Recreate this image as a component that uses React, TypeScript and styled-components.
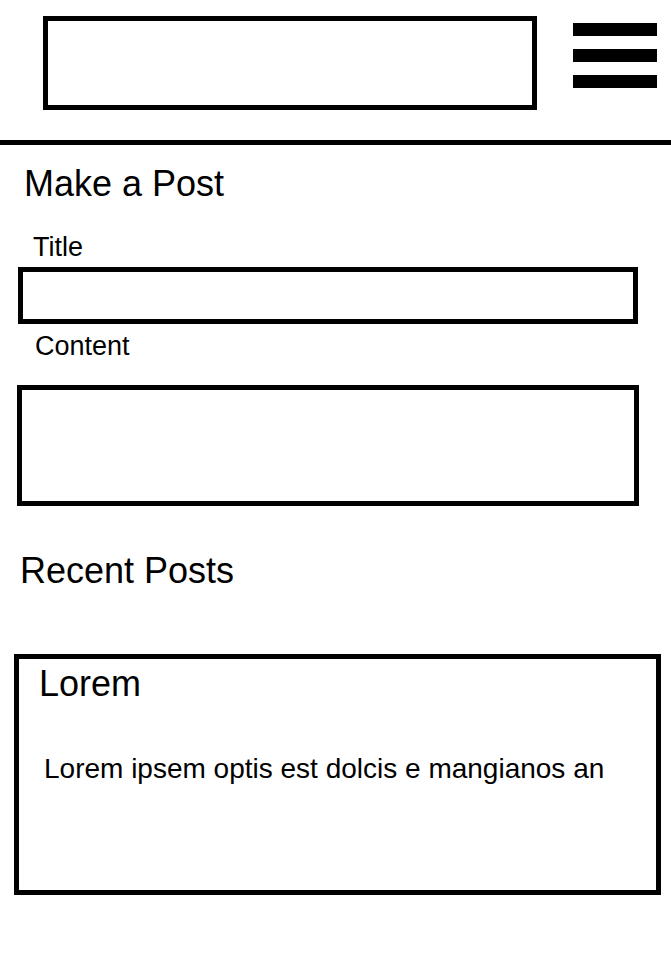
import * as React from 'react';
import styled, { createGlobalStyle } from 'styled-components';

const GlobalStyle = createGlobalStyle`
  html, body {
    margin: 0;
    padding: 0;
    background: #fff;
  }
  body {
    font-family: "Liberation Sans", Arial, sans-serif;
    color: #000;
  }
`;

const Page = styled.div`
  width: 671px;
  min-height: 968px;
  display: flex;
  flex-direction: column;
`;

const Header = styled.header`
  height: 145px;
  box-sizing: border-box;
  display: flex;
  align-items: flex-start;
  padding: 16px 0 0 43px;
  border-bottom: 5px solid #000;
`;

const LogoBox = styled.div`
  width: 494px;
  height: 94px;
  border: 5px solid #000;
  box-sizing: border-box;
`;

const MenuButton = styled.button`
  display: flex;
  flex-direction: column;
  gap: 13px;
  margin: 7px 0 0 36px;
  padding: 0;
  border: none;
  background: none;
  cursor: pointer;
`;

const MenuBar = styled.span`
  display: block;
  width: 84px;
  height: 13px;
  background: #000;
`;

const Main = styled.main`
  display: flex;
  flex-direction: column;
  align-items: flex-start;
`;

const SectionTitle = styled.h2<{ $top: number; $indent: number }>`
  margin: ${p => p.$top}px 0 0 ${p => p.$indent}px;
  font-size: 36px;
  font-weight: 400;
  line-height: 1;
`;

const Label = styled.label<{ $top: number; $indent: number }>`
  display: block;
  margin: ${p => p.$top}px 0 0 ${p => p.$indent}px;
  font-size: 27px;
  line-height: 1;
`;

const TextInput = styled.input`
  display: block;
  margin: 6px 0 0 18px;
  width: 620px;
  height: 57px;
  border: 5px solid #000;
  border-radius: 0;
  box-sizing: border-box;
  outline: none;
  font: 24px "Liberation Sans", Arial, sans-serif;
  padding: 0 12px;
`;

const TextArea = styled.textarea`
  display: block;
  margin: 25px 0 0 17px;
  width: 622px;
  height: 121px;
  border: 5px solid #000;
  border-radius: 0;
  box-sizing: border-box;
  outline: none;
  resize: none;
  font: 24px "Liberation Sans", Arial, sans-serif;
  padding: 8px 12px;
`;

const PostCard = styled.article`
  margin: 65px 0 0 14px;
  width: 647px;
  height: 241px;
  border: 5px solid #000;
  box-sizing: border-box;
  padding: 7px 0 0 20px;
`;

const PostTitle = styled.h3`
  margin: 0;
  font-size: 36px;
  font-weight: 400;
  line-height: 1;
`;

const PostBody = styled.p`
  margin: 53px 0 0 5px;
  font-size: 28px;
  line-height: 1;
`;

const posts = [
  { title: 'Lorem', body: 'Lorem ipsem optis est dolcis e mangianos an' },
];

export default function App() {
  const [title, setTitle] = React.useState('');
  const [content, setContent] = React.useState('');

  return (
    <Page>
      <GlobalStyle />
      <Header>
        <LogoBox />
        <MenuButton aria-label="Menu">
          <MenuBar />
          <MenuBar />
          <MenuBar />
        </MenuButton>
      </Header>
      <Main>
        <SectionTitle $top={21} $indent={24}>Make a Post</SectionTitle>
        <Label $top={32} $indent={33} htmlFor="title">Title</Label>
        <TextInput id="title" value={title} onChange={e => setTitle(e.target.value)} />
        <Label $top={9} $indent={35} htmlFor="content">Content</Label>
        <TextArea id="content" value={content} onChange={e => setContent(e.target.value)} />

        <SectionTitle $top={47} $indent={20}>Recent Posts</SectionTitle>
        {posts.map(post => (
          <PostCard key={post.title}>
            <PostTitle>{post.title}</PostTitle>
            <PostBody>{post.body}</PostBody>
          </PostCard>
        ))}
      </Main>
    </Page>
  );
}
